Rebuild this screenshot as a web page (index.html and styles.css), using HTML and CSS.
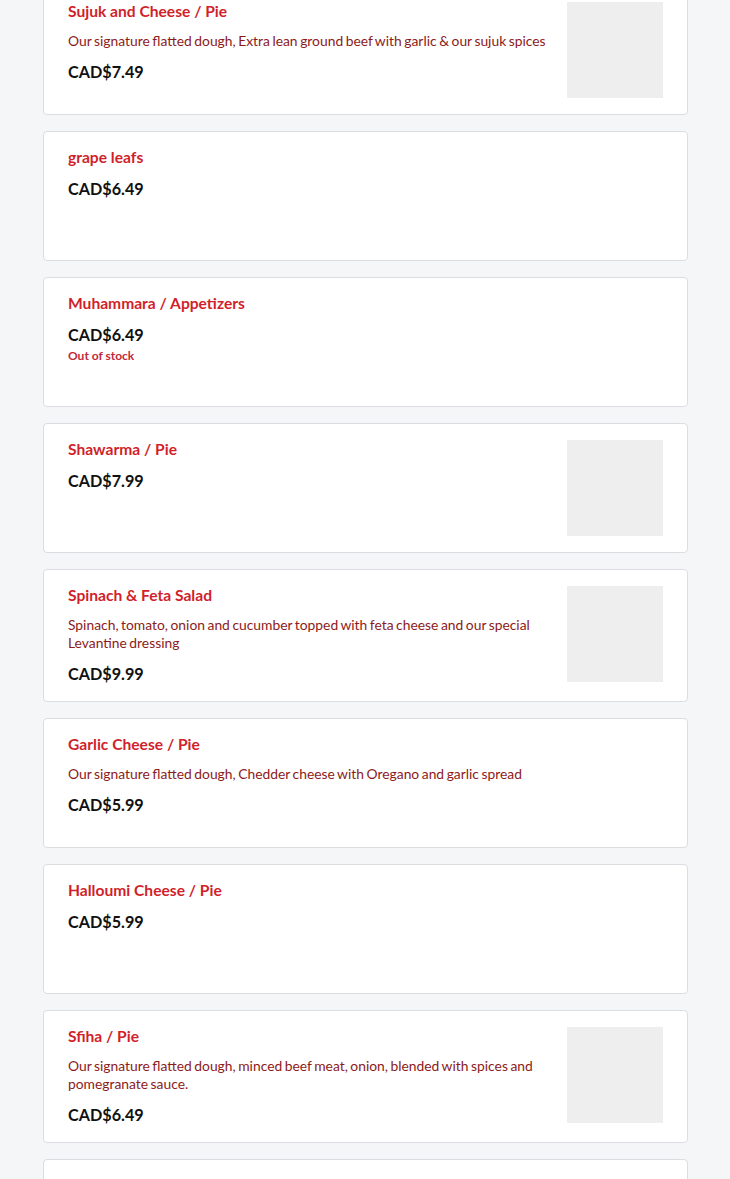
FILE: index.html
```
<!DOCTYPE html>
<html lang="en">
<head>
<meta charset="utf-8">
<title>Menu</title>
<link rel="stylesheet" href="styles.css">
</head>
<body>
<main class="menu-list">
  <article class="item">
    <div class="item-info">
      <h3 class="item-name">Sujuk and Cheese / Pie</h3>
      <p class="item-desc">Our signature flatted dough, Extra lean ground beef with garlic &amp; our sujuk spices</p>
      <div class="item-price">CAD$7.49</div>
    </div>
    <div class="item-thumb"></div>
  </article>
  <article class="item">
    <div class="item-info">
      <h3 class="item-name">grape leafs</h3>
      <div class="item-price">CAD$6.49</div>
    </div>
  </article>
  <article class="item">
    <div class="item-info">
      <h3 class="item-name">Muhammara / Appetizers</h3>
      <div class="item-price">CAD$6.49</div>
      <div class="item-stock">Out of stock</div>
    </div>
  </article>
  <article class="item">
    <div class="item-info">
      <h3 class="item-name">Shawarma / Pie</h3>
      <div class="item-price">CAD$7.99</div>
    </div>
    <div class="item-thumb"></div>
  </article>
  <article class="item">
    <div class="item-info">
      <h3 class="item-name">Spinach &amp; Feta Salad</h3>
      <p class="item-desc">Spinach, tomato, onion and cucumber topped with feta cheese and our special Levantine dressing</p>
      <div class="item-price">CAD$9.99</div>
    </div>
    <div class="item-thumb"></div>
  </article>
  <article class="item">
    <div class="item-info">
      <h3 class="item-name">Garlic Cheese / Pie</h3>
      <p class="item-desc">Our signature flatted dough, Chedder cheese with Oregano and garlic spread</p>
      <div class="item-price">CAD$5.99</div>
    </div>
  </article>
  <article class="item">
    <div class="item-info">
      <h3 class="item-name">Halloumi Cheese / Pie</h3>
      <div class="item-price">CAD$5.99</div>
    </div>
  </article>
  <article class="item">
    <div class="item-info">
      <h3 class="item-name">Sfiha / Pie</h3>
      <p class="item-desc">Our signature flatted dough, minced beef meat, onion, blended with spices and pomegranate sauce.</p>
      <div class="item-price">CAD$6.49</div>
    </div>
    <div class="item-thumb"></div>
  </article>
  <article class="item">
    <div class="item-info">
      <h3 class="item-name">Zaatar / Pie</h3>
      <div class="item-price">CAD$4.99</div>
    </div>
  </article>
</main>
</body>
</html>
```
FILE: styles.css
```
html, body {
  margin: 0;
  padding: 0;
}
body {
  background: #f5f6f8;
  font-family: Lato, "Noto Sans", sans-serif;
  overflow: hidden;
}
.menu-list {
  width: 645px;
  margin: -15px 0 0 43px;
  display: flex;
  flex-direction: column;
  gap: 16px;
}
.item {
  background: #ffffff;
  border: 1px solid #dcdde0;
  border-radius: 4px;
  padding: 16px 24px;
  display: flex;
  gap: 16px;
  min-height: 96px;
}
.item-info {
  flex: 1;
  min-width: 0;
}
.item-name {
  margin: 0;
  font-size: 15.6px;
  line-height: 19px;
  font-weight: 700;
  color: #d11f2b;
}
.item-desc {
  margin: 11px 0 0;
  font-size: 13.85px;
  line-height: 18px;
  word-spacing: -1px;
  color: #8c1b20;
}
.item-price {
  margin-top: 11px;
  font-size: 16.2px;
  line-height: 22px;
  font-weight: 700;
  color: #111111;
}
.item-stock {
  margin-top: 2px;
  font-size: 12px;
  line-height: 16px;
  font-weight: 700;
  color: #c3283a;
}
.item-thumb {
  flex: none;
  width: 96px;
  height: 96px;
  background: #eeeeee;
}
```
